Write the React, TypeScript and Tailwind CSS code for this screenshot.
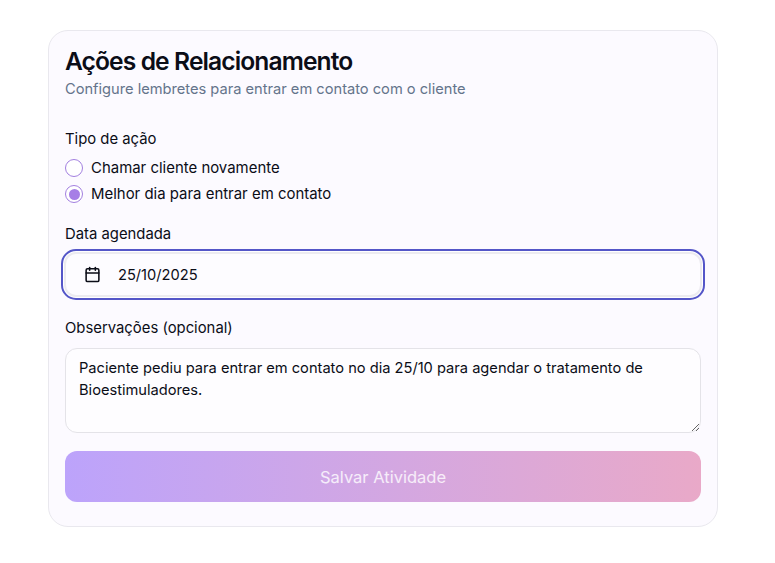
import { Calendar } from "lucide-react";

function Radio({ label, checked }: { label: string; checked?: boolean }) {
  return (
    <div className="flex h-[26px] items-center gap-[8px]">
      <span className="flex h-[18px] w-[18px] items-center justify-center rounded-full border-[1.5px] border-[#a27fe0] bg-white">
        {checked && <span className="h-[11px] w-[11px] rounded-full bg-[#a67ee6]" />}
      </span>
      <span className="text-[14.95px] font-normal leading-5 text-[#0b0d17]">{label}</span>
    </div>
  );
}

export default function App() {
  return (
    <div className="min-h-[563px] bg-white pt-[30px] pl-[48px] font-['Inter',sans-serif]">
      <div className="h-[497px] w-[670px] rounded-[20px] border border-[#e9e8ee] bg-[#fcfaff] px-4 pt-[14px]">
        <h1 className="text-[24.6px] font-semibold leading-8 tracking-[-0.9px] text-[#0b0d17]">Ações de Relacionamento</h1>
        <p className="mt-[2px] text-[14.65px] leading-5 text-[#64748b]">Configure lembretes para entrar em contato com o cliente</p>

        <div className="mt-[30px] text-[14.85px] font-normal leading-5 text-[#0b0d17]">Tipo de ação</div>
        <div className="mt-[6px] flex flex-col">
          <Radio label="Chamar cliente novamente" />
          <Radio label="Melhor dia para entrar em contato" checked />
        </div>

        <div className="mt-[17px] text-[14.85px] font-normal leading-5 text-[#0b0d17]">Data agendada</div>
        <div className="mt-[5px] -mx-[4px] flex h-[51px] items-center rounded-[15px] border-[2.5px] border-[#5456c8] bg-white p-[1px]">
          <div className="flex h-full w-full items-center rounded-[12px] border-2 border-[#ecebf0] bg-[#fdfcff] pl-[17.5px]">
            <Calendar className="h-[17px] w-[17px] text-[#0b0d17]" strokeWidth={2.2} />
            <span className="ml-[17.5px] text-[14.65px] leading-5 text-[#0b0d17]">25/10/2025</span>
          </div>
        </div>

        <div className="mt-[18px] text-[14.85px] font-normal leading-5 text-[#0b0d17]">Observações (opcional)</div>
        <textarea
          readOnly
          className="mt-[10px] block h-[85px] w-full rounded-[12px] border border-[#e4e3e8] bg-[#fefdff] px-[13px] py-[8px] text-[14.65px] leading-[22px] text-[#0b0d17] outline-none"
          defaultValue="Paciente pediu para entrar em contato no dia 25/10 para agendar o tratamento de Bioestimuladores."
        />
        <button className="mt-[18px] flex h-[51px] w-full items-center justify-center rounded-[12px] bg-gradient-to-r from-[#bca3fb] to-[#e9a9c8] pt-[1px] text-[16.5px] font-normal text-white/80">
          Salvar Atividade
        </button>
      </div>
    </div>
  );
}
